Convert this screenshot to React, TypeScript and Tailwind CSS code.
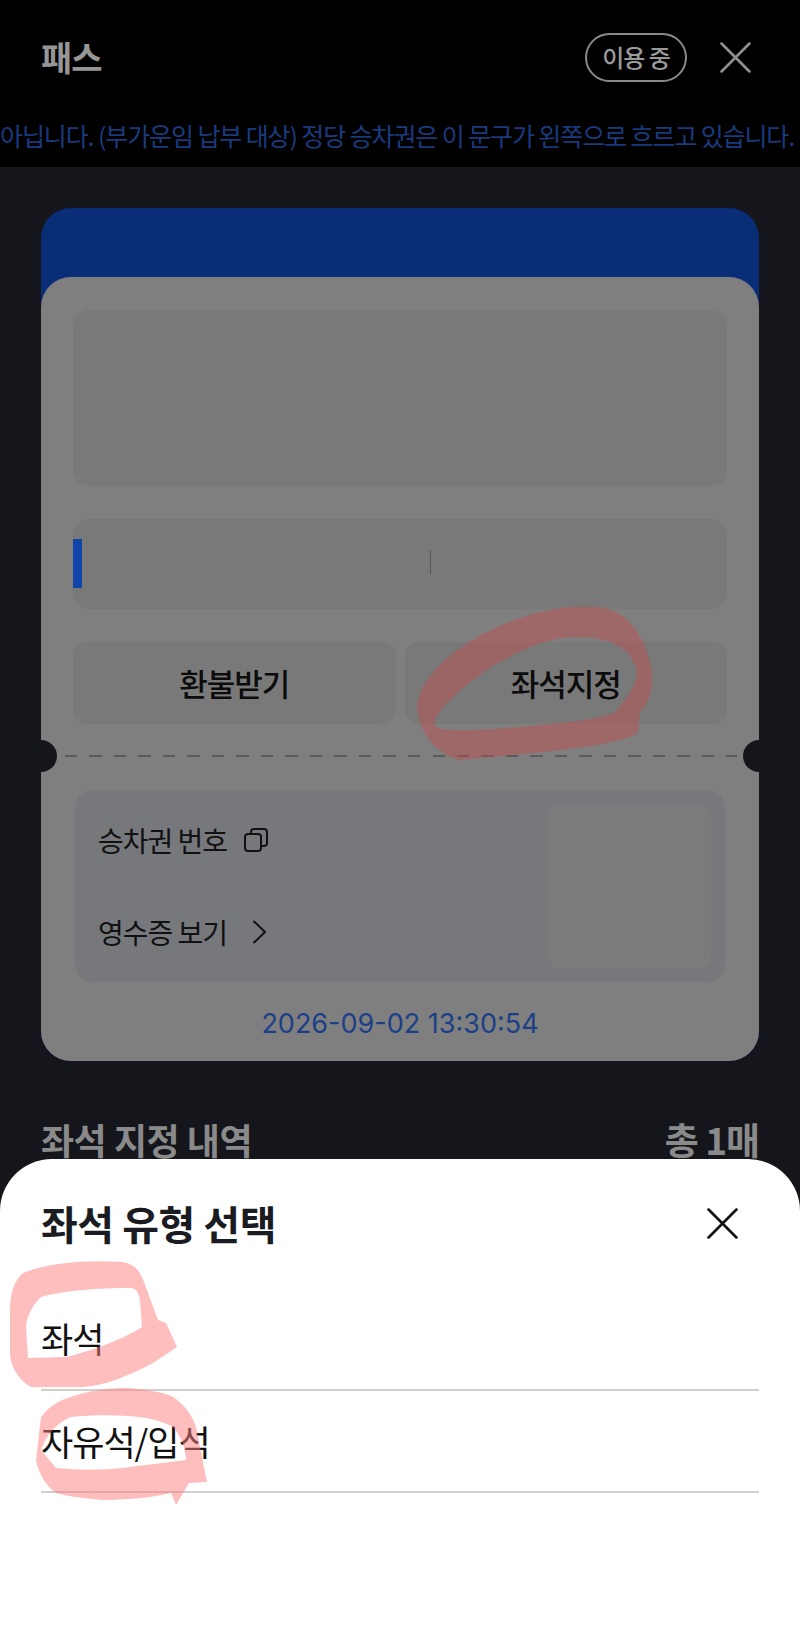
import React from "react";

function Cross({ className }: { className: string }) {
  return (
    <svg viewBox="0 0 30 30" fill="none" stroke="currentColor" strokeWidth="2.6" strokeLinecap="round" className={className}>
      <path d="M1.5 1.5 28.5 28.5M28.5 1.5 1.5 28.5" />
    </svg>
  );
}

export default function App() {
  return (
    <div
      className="relative h-[1628px] w-[800px] overflow-hidden bg-[#14161c]"
      style={{ fontFamily: '"Noto Sans CJK KR", "Noto Sans", sans-serif' }}
    >
      <header className="h-[167px] bg-black">
        <div className="flex h-[114px] items-center justify-between pl-[41px] pr-[49px]">
          <h1 className="text-[34px] font-bold leading-none tracking-[-1px] text-[#969696]">패스</h1>
          <div className="flex items-center gap-[33px]">
            <span className="flex h-[49px] w-[102px] items-center justify-center rounded-full border-2 border-[#8a8a8a] text-[24px] font-medium tracking-[-1px] text-[#9a9a9a]">
              이용 중
            </span>
            <Cross className="h-[31px] w-[31px] text-[#8f8f8f]" />
          </div>
        </div>
        <p className="h-[53px] overflow-hidden whitespace-nowrap text-[25px] leading-[42px] tracking-[-1.1px] text-[#1b3a7e]">
          아닙니다. (부가운임 납부 대상) 정당 승차권은 이 문구가 왼쪽으로 흐르고 있습니다.
        </p>
      </header>

      <main className="px-[41px] pt-[41px]">
        <section className="rounded-[30px] bg-[#0a2d78] pt-[69px]">
          <div className="relative rounded-[30px] bg-[#7f7f7f] px-[32px] pb-[17px] pt-[33px]">
            <div className="h-[176px] rounded-[16px] bg-[#797979]" />
            <div className="mt-[33px] flex h-[90px] items-center justify-center rounded-[16px] bg-[#797979]">
              <span className="absolute left-[32px] top-[262px] h-[49px] w-[9px] bg-[#0f44a8]" />
              <span className="ml-[60px] mt-[-4px] h-[24px] w-px bg-[#555555]" />
            </div>
            <div className="mt-[33px] grid h-[82px] grid-cols-2 gap-[9px]">
              <div className="flex items-center justify-center rounded-[14px] bg-[#797979] text-[31px] font-medium tracking-[-1px] text-[#0c0c0c]">환불받기</div>
              <div className="flex items-center justify-center rounded-[14px] bg-[#797979] text-[31px] font-medium tracking-[-1px] text-[#0c0c0c]">좌석지정</div>
            </div>

            <div className="relative mx-[2px] mt-[66px] flex h-[192px] items-center justify-between rounded-[18px] bg-[#76787c] pl-[23px] pr-[14px]">
              <div className="flex flex-col gap-[57px]">
                <div className="flex h-[35px] items-center gap-[17px] text-[28px] tracking-[-1px] text-[#111111]">
                  승차권 번호
                  <svg viewBox="0 0 24 24" fill="none" stroke="currentColor" strokeWidth="2" className="h-[24px] w-[24px]">
                    <rect x="1" y="6" width="16" height="17" rx="3" />
                    <path d="M7 6V4a3 3 0 0 1 3-3h10a3 3 0 0 1 3 3v11a3 3 0 0 1-3 3h-3" />
                  </svg>
                </div>
                <div className="flex h-[35px] items-center gap-[25px] text-[28px] tracking-[-1px] text-[#111111]">
                  영수증 보기
                  <svg viewBox="0 0 14 24" fill="none" stroke="currentColor" strokeWidth="2" className="h-[24px] w-[14px]">
                    <path d="M1.5 1 13 12 1.5 23" />
                  </svg>
                </div>
              </div>
              <div className="h-[165px] w-[164px] rounded-[14px] bg-[#7b7b7b]" />
            </div>

            <p className="mt-[22px] text-center text-[27px] leading-[40px] text-[#1c3f87]" style={{ fontFamily: "Inter, sans-serif" }}>
              2026-09-02 13:30:54
            </p>

            <div className="absolute left-[24px] right-[22px] top-[478px] h-[2px] bg-[repeating-linear-gradient(90deg,#5a5a5a_0_12px,transparent_12px_24.5px)]" />
            <span className="absolute left-[-16px] top-[463px] h-[32px] w-[32px] rounded-full bg-[#14161c]" />
            <span className="absolute right-[-16px] top-[463px] h-[32px] w-[32px] rounded-full bg-[#14161c]" />
          </div>
        </section>

        <div className="mt-[53px] flex items-center justify-between text-[#8a8a8a]">
          <h2 className="text-[36px] font-bold leading-[50px] tracking-[-0.5px]">좌석 지정 내역</h2>
          <span className="text-[37px] font-bold leading-[50px] tracking-[-1px]">총 1매</span>
        </div>
      </main>

      <svg className="pointer-events-none absolute left-0 top-0" width="800" height="800" viewBox="0 0 800 800">
        <path
          fillRule="evenodd"
          fill="#cc4a4a"
          fillOpacity="0.42"
          d="M587 607C620 605 638 625 648 655C656 682 652 700 640 712L638 733C610 748 540 752 459 760C435 752 420 735 417 707C420 670 470 635 520 618C545 610 565 606 587 607ZM571 637C530 640 480 670 450 700C438 712 432 722 436 727C445 732 480 730 520 727C560 723 600 720 615 712C630 695 640 680 636 668C630 650 615 636 571 637Z"
        />
      </svg>

      <aside className="absolute inset-x-0 bottom-0 h-[469px] rounded-t-[52px] bg-white px-[41px]">
        <div className="flex h-[128px] items-center justify-between pr-[21px]">
          <h3 className="text-[40px] font-bold tracking-[-0.5px] text-[#1a1c22]">좌석 유형 선택</h3>
          <Cross className="h-[31px] w-[31px] text-[#111111]" />
        </div>
        <div className="flex h-[104px] items-end border-b-2 border-[#cfcfcf] pb-[28px] text-[35px] leading-[46px] tracking-[-1px] text-[#111111]">좌석</div>
        <div className="flex h-[102px] items-end border-b-2 border-[#cfcfcf] pb-[27px] text-[35px] leading-[46px] tracking-[-1px] text-[#111111]">자유석/입석</div>
      </aside>

      <svg className="pointer-events-none absolute left-0 top-[1240px]" width="240" height="280" viewBox="0 1240 240 280">
        <path
          fillRule="evenodd"
          fill="#ff7d7d"
          fillOpacity="0.5"
          d="M23 1273C50 1262 90 1260 122 1262C134 1264 140 1270 144 1282L158 1320L166 1323L177 1347L153 1363C130 1375 105 1386 82 1387L31 1387C18 1380 10 1365 10 1353L10 1307C11 1290 15 1280 23 1273ZM41 1297C33 1305 27 1315 26 1327L28 1358L66 1357C95 1350 125 1338 142 1327L140 1300C138 1290 135 1288 130 1288C100 1288 65 1290 41 1297Z"
        />
        <path
          fillRule="evenodd"
          fill="#ff7d7d"
          fillOpacity="0.5"
          d="M41 1417C50 1405 60 1400 71 1397C90 1390 110 1388 128 1388C150 1390 163 1392 173 1397C185 1405 192 1415 196 1427L207 1482L189 1483L176 1505L171 1493C150 1498 125 1500 102 1500C85 1498 70 1497 56 1493C45 1485 38 1472 36 1460ZM71 1417C58 1422 47 1433 41 1450L56 1468C80 1470 100 1470 122 1468L186 1460C185 1445 180 1435 173 1427C160 1420 145 1417 128 1416C110 1415 90 1415 71 1417Z"
        />
      </svg>
    </div>
  );
}
